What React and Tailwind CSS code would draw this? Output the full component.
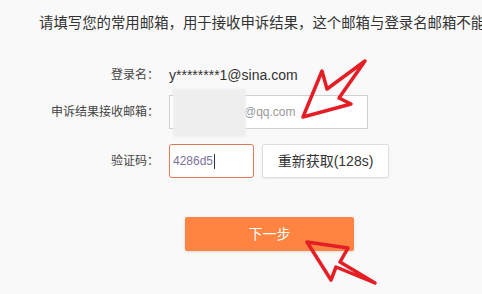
import React from 'react';

const font = { fontFamily: '"Liberation Sans", "Noto Sans CJK SC", sans-serif' };

function Arrows() {
  return (
    <svg className="absolute inset-0 pointer-events-none" width="482" height="294" viewBox="0 0 482 294">
      <polygon
        points="303,117 322,71 327,89 365,61 339,98 351,104"
        fill="none" stroke="#e51d25" strokeWidth="3.5" strokeLinejoin="round" strokeLinecap="round"
      />
      <polygon
        points="307,242 348,248 340,262 375,283 336,267 331,280"
        fill="none" stroke="#e51d25" strokeWidth="3.5" strokeLinejoin="round" strokeLinecap="round"
      />
    </svg>
  );
}

function Row({ label, children, className = '' }) {
  return (
    <div className={`flex items-center h-[34px] ${className}`}>
      <div className="w-[159px] text-right text-[12px] text-[#444] whitespace-nowrap">{label}</div>
      <div className="ml-[10px] flex items-center h-full">{children}</div>
    </div>
  );
}

export default function App() {
  return (
    <div className="relative w-[482px] h-[294px] bg-[#f9f9f9] overflow-hidden" style={font}>
      <div className="pt-[13px] pl-[39px] text-[14.4px] leading-[20px] text-[#333] whitespace-nowrap">
        请填写您的常用邮箱，用于接收申诉结果，这个邮箱与登录名邮箱不能相同
      </div>

      <div className="mt-[25px]">
        <Row label="登录名：">
          <span className="text-[14px] text-[#333]">y********1@sina.com</span>
        </Row>

        <Row label="申诉结果接收邮箱：" className="mt-[3px]">
          <div className="relative w-[199px] h-[34px] border border-[#cfcfcf] bg-white flex items-center">
            <span className="ml-[74px] text-[12px] text-[#999]">@qq.com</span>
            <div className="absolute left-[3px] top-[-7px] w-[73px] h-[48px] bg-[#eeeeee] blur-[1px]" />
          </div>
        </Row>

        <Row label="验证码：" className="mt-[15px]">
          <div className="w-[85px] h-[34px] rounded-[3px] border-[1.5px] border-[#e07756] bg-white flex items-center pl-[3px]">
            <span className="text-[12px] text-[#7d7398]">4286d5</span>
            <span className="w-px h-[15px] bg-[#333] ml-px" />
          </div>
          <button className="ml-[8px] w-[127px] h-[34px] rounded-[2px] border border-[#dddddd] bg-white text-[14px] text-[#333] shadow-[0_1px_2px_rgba(0,0,0,0.06)]">
            重新获取(128s)
          </button>
        </Row>

        <div className="mt-[39px] ml-[185px]">
          <button className="w-[169px] h-[34px] rounded-[2px] bg-[#ff8341] text-white text-[14px] shadow-[0_1px_3px_rgba(0,0,0,0.12)]">
            下一步
          </button>
        </div>
      </div>

      <Arrows />
    </div>
  );
}
